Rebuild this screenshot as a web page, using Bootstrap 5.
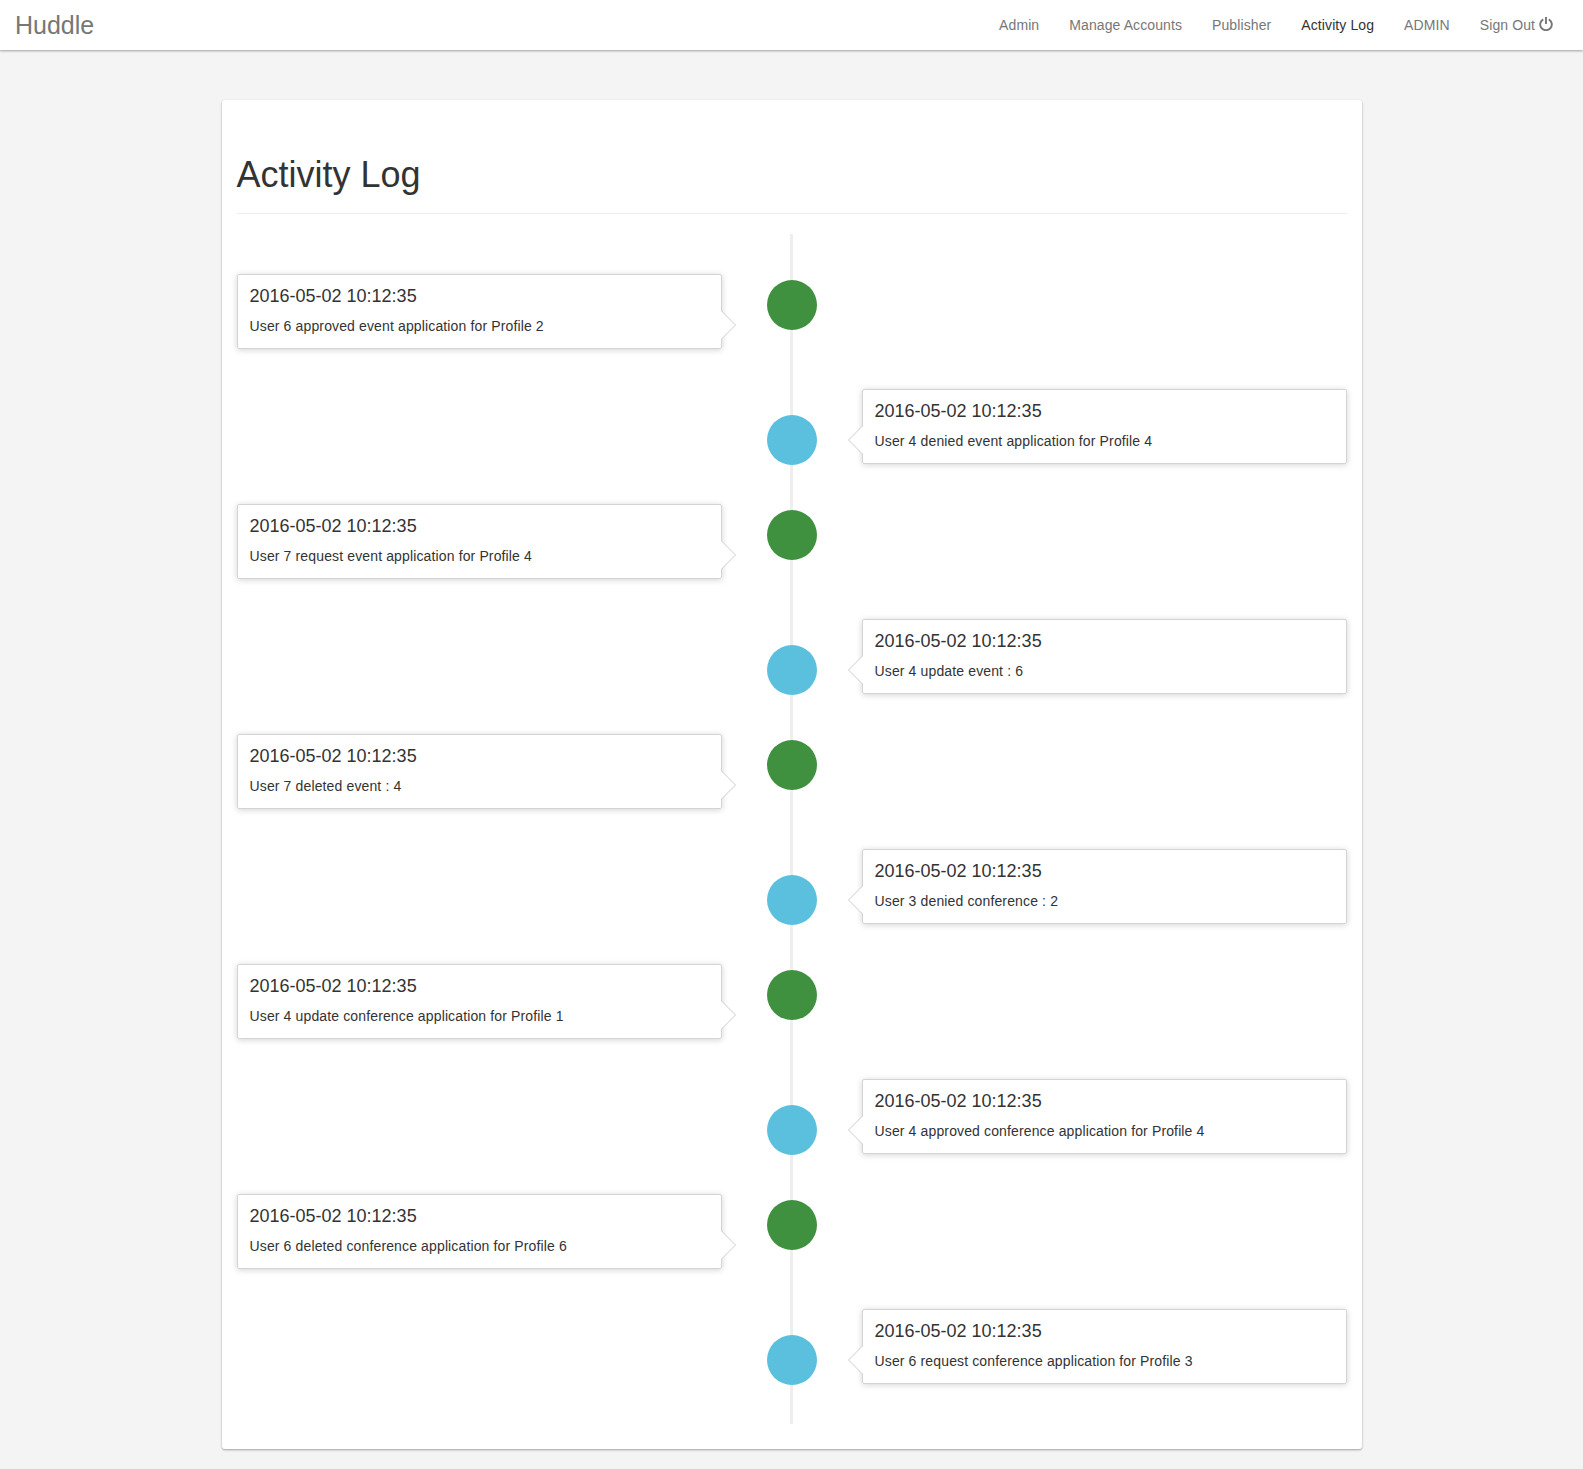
<!DOCTYPE html>
<html lang="en">
<head>
<meta charset="utf-8">
<meta name="viewport" content="width=device-width, initial-scale=1">
<title>Huddle</title>
<link href="https://cdn.jsdelivr.net/npm/bootstrap@5.3.0/dist/css/bootstrap.min.css" rel="stylesheet">
<style>
body{font-family:"Liberation Sans",Arial,sans-serif;font-size:14px;line-height:20px;color:#333;background:#f4f4f4}
.topbar{height:50px;padding:0 15px;background:#fff;box-shadow:0 1px 3px rgba(0,0,0,.12),0 1px 2px rgba(0,0,0,.24)}
.topbar .navbar-brand{font-size:25px;line-height:20px;color:#777;padding:0;margin:0}
.topbar .nav-link{padding:15px;color:#777;line-height:20px;letter-spacing:.1px}
.topbar .nav-link.active{color:#333}
.power{display:inline-block;vertical-align:-1px}
.sheet{width:1140px;height:1349px;margin:50px auto 20px;padding:0 15px;background:#fff;border-radius:3px;box-shadow:0 1px 3px rgba(0,0,0,.12),0 1px 2px rgba(0,0,0,.24)}
.page-title{font-size:36px;line-height:40px;font-weight:400;margin:0;padding:55px 0 18px;border-bottom:1px solid #eee}
.timeline{margin:20px 0 0;padding:20px 0;background:linear-gradient(#eee,#eee) 553.5px 0/3px 100% no-repeat}
.entry{height:115px;padding:20px 0}
.entry:nth-child(even){flex-direction:row-reverse}
.bubble{position:relative;width:485px;height:75px;padding:11px 12px;border:1px solid #d4d4d4;border-radius:2px;box-shadow:0 1px 6px rgba(0,0,0,.175)}
.bubble h4{font-size:18px;line-height:20px;font-weight:400;margin:0 0 10px}
.bubble p{letter-spacing:.135px}
.bubble::before,.bubble::after{content:"";position:absolute;border:solid transparent}
.bubble::before{top:35px;right:-15px;border-width:15px 0 15px 15px;border-left-color:#ccc}
.bubble::after{top:36px;right:-14px;border-width:14px 0 14px 14px;border-left-color:#fff}
.entry:nth-child(even) .bubble::before{right:auto;left:-15px;border-width:15px 15px 15px 0;border-right-color:#ccc}
.entry:nth-child(even) .bubble::after{right:auto;left:-14px;border-width:14px 14px 14px 0;border-right-color:#fff}
.dot{width:50px;height:50px;margin-top:6px;background:#3f903f}
.entry:nth-child(even) .dot{margin-top:26px;background:#5bc0de}
.side{width:485px}
</style>
<script src="https://cdn.jsdelivr.net/npm/bootstrap@5.3.0/dist/js/bootstrap.bundle.min.js"></script>
</head>
<body>
<nav class="topbar d-flex align-items-center justify-content-between">
  <a class="navbar-brand" href="#">Huddle</a>
  <ul class="nav flex-nowrap">
    <li class="nav-item"><a class="nav-link" href="#">Admin</a></li>
    <li class="nav-item"><a class="nav-link" href="#">Manage Accounts</a></li>
    <li class="nav-item"><a class="nav-link" href="#">Publisher</a></li>
    <li class="nav-item"><a class="nav-link active" href="#">Activity Log</a></li>
    <li class="nav-item"><a class="nav-link" href="#">ADMIN</a></li>
    <li class="nav-item"><a class="nav-link" href="#">Sign Out <svg class="power" width="14" height="14" viewBox="0 0 14 14" fill="none" stroke="currentColor" stroke-width="1.9"><path d="M4.2 2.3A5.8 5.8 0 1 0 9.8 2.3M7 0V7"/></svg></a></li>
  </ul>
</nav>
<main class="sheet">
  <h1 class="page-title">Activity Log</h1>
  <ul class="timeline list-unstyled">
    <li class="entry d-flex justify-content-between align-items-start"><div class="bubble"><h4>2016-05-02 10:12:35</h4><p class="m-0">User 6 approved event application for Profile 2</p></div><div class="dot rounded-circle"></div><div class="side"></div></li>
    <li class="entry d-flex justify-content-between align-items-start"><div class="bubble"><h4>2016-05-02 10:12:35</h4><p class="m-0">User 4 denied event application for Profile 4</p></div><div class="dot rounded-circle"></div><div class="side"></div></li>
    <li class="entry d-flex justify-content-between align-items-start"><div class="bubble"><h4>2016-05-02 10:12:35</h4><p class="m-0">User 7 request event application for Profile 4</p></div><div class="dot rounded-circle"></div><div class="side"></div></li>
    <li class="entry d-flex justify-content-between align-items-start"><div class="bubble"><h4>2016-05-02 10:12:35</h4><p class="m-0">User 4 update event : 6</p></div><div class="dot rounded-circle"></div><div class="side"></div></li>
    <li class="entry d-flex justify-content-between align-items-start"><div class="bubble"><h4>2016-05-02 10:12:35</h4><p class="m-0">User 7 deleted event : 4</p></div><div class="dot rounded-circle"></div><div class="side"></div></li>
    <li class="entry d-flex justify-content-between align-items-start"><div class="bubble"><h4>2016-05-02 10:12:35</h4><p class="m-0">User 3 denied conference : 2</p></div><div class="dot rounded-circle"></div><div class="side"></div></li>
    <li class="entry d-flex justify-content-between align-items-start"><div class="bubble"><h4>2016-05-02 10:12:35</h4><p class="m-0">User 4 update conference application for Profile 1</p></div><div class="dot rounded-circle"></div><div class="side"></div></li>
    <li class="entry d-flex justify-content-between align-items-start"><div class="bubble"><h4>2016-05-02 10:12:35</h4><p class="m-0">User 4 approved conference application for Profile 4</p></div><div class="dot rounded-circle"></div><div class="side"></div></li>
    <li class="entry d-flex justify-content-between align-items-start"><div class="bubble"><h4>2016-05-02 10:12:35</h4><p class="m-0">User 6 deleted conference application for Profile 6</p></div><div class="dot rounded-circle"></div><div class="side"></div></li>
    <li class="entry d-flex justify-content-between align-items-start"><div class="bubble"><h4>2016-05-02 10:12:35</h4><p class="m-0">User 6 request conference application for Profile 3</p></div><div class="dot rounded-circle"></div><div class="side"></div></li>
  </ul>
</main>
</body>
</html>
